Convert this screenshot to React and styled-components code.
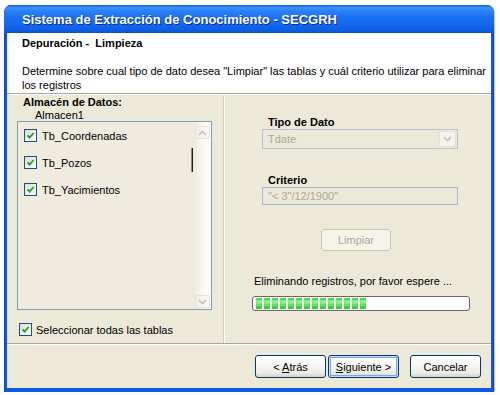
import React from "react";
import styled, { createGlobalStyle } from "styled-components";

const Global = createGlobalStyle`
  html, body { margin: 0; padding: 0; background: #ffffff; }
  body { font-family: "Liberation Sans", Arial, sans-serif; font-size: 11px; color: #000; }
  * { box-sizing: border-box; }
`;

const Window = styled.div`
  margin: 5px 0 0 4px;
  width: 490px;
  height: 387px;
  display: flex;
  flex-direction: column;
  border-radius: 7px 7px 0 0;
  overflow: hidden;
  background: #0843d6;
  box-shadow: 1px 1px 1px rgba(0,0,0,0.25);
`;

const TitleBar = styled.div`
  height: 28px;
  flex: none;
  display: flex;
  align-items: center;
  padding: 1px 0 0 18px;
  background: linear-gradient(to bottom, #0a5ee8 0%, #3d91fa 10%, #2c80f7 22%, #1a70f2 45%, #1268ee 70%, #0d5ee3 90%, #0a50d0 100%);
  color: #ffffff;
  font-family: "Liberation Sans", Arial, sans-serif;
  font-weight: bold;
  font-size: 13px;
  text-shadow: 1px 1px 0 #0b2a9a;
`;

const Frame = styled.div`
  flex: 1;
  display: flex;
  padding: 0 3px 4px 3px;
  background: linear-gradient(to right, #0a3fcf, #1058ec 2px, #1058ec calc(100% - 2px), #0a3fcf);
`;

const Content = styled.div`
  flex: 1;
  display: flex;
  flex-direction: column;
  background: #ece9d8;
`;

const Header = styled.div`
  height: 61px;
  flex: none;
  background: #ffffff;
  border-bottom: 1px solid #aca899;
  box-shadow: 0 1px 0 #ffffff;
  padding: 4px 0 0 15px;
`;

const HeaderTitle = styled.div`
  font-weight: bold;
  font-size: 11px;
  line-height: 13px;
`;

const HeaderText = styled.div`
  margin-top: 14px;
  font-size: 11px;
  line-height: 14px;
`;

const Body = styled.div`
  flex: 1;
  display: grid;
  grid-template-columns: 217px 265px;
  margin-top: 1px;
`;

const LeftPane = styled.div`
  padding: 1px 0 0 10px;
  border-right: 1px solid #d3cfbd;
  box-shadow: 1px 0 0 #ffffff;
  display: flex;
  flex-direction: column;
`;

const PaneTitle = styled.div`
  font-weight: bold;
  line-height: 13px;
  margin-left: 6px;
`;

const StoreName = styled.div`
  line-height: 13px;
  margin-left: 18px;
`;

const ListBox = styled.div`
  position: relative;
  margin-top: -1px;
  width: 195px;
  height: 189px;
  border: 1px solid #7f9db9;
  background: #efecdf;
  display: flex;
`;

const Items = styled.div`
  flex: 1;
  display: flex;
  flex-direction: column;
  padding-left: 6px;
`;

const Item = styled.label`
  height: 27px;
  display: flex;
  align-items: center;
  gap: 5px;
  font-size: 11px;
`;

const Caret = styled.div`
  position: absolute;
  left: 173px;
  top: 26px;
  width: 2px;
  height: 24px;
  background: #1e1e1e;
  border-left: 1px solid #8a8a8a;
`;

const ScrollBar = styled.div`
  width: 17px;
  display: flex;
  flex-direction: column;
  justify-content: space-between;
  padding: 4px 1px 1px 1px;
  background: linear-gradient(to right, #eeebe0, #fbfaf6 60%, #ffffff);
`;

const ScrollBtn = styled.div`
  height: 13px;
  display: flex;
  align-items: center;
  justify-content: center;
  border: 1px solid #e4e2d8;
  border-radius: 2px;
  background: linear-gradient(to right, #f1efe8, #f9f8f4);
`;

const SelectAll = styled.label`
  margin: 13px 0 0 2px;
  display: flex;
  align-items: center;
  gap: 4px;
`;

const Box = styled.span`
  width: 13px;
  height: 13px;
  flex: none;
  border: 1px solid #1c5180;
  background: linear-gradient(135deg, #dcdcd7, #ffffff);
  display: flex;
  align-items: center;
  justify-content: center;
`;

const RightPane = styled.div`
  display: flex;
  flex-direction: column;
  padding: 21px 0 0 38px;
`;

const FieldLabel = styled.div`
  font-weight: bold;
  line-height: 13px;
  margin: ${(p) => p.$top || 0}px 0 0 6px;
`;

const Combo = styled.div`
  width: 196px;
  height: 20px;
  border: 1px solid #b7c3d2;
  display: flex;
  align-items: center;
  justify-content: space-between;
  padding-left: 5px;
  color: #aca899;
`;

const ComboArrow = styled.div`
  width: 17px;
  height: 16px;
  margin-right: 1px;
  border-radius: 2px;
  border: 1px solid #e2e0d6;
  background: #f4f3ee;
  display: flex;
  align-items: center;
  justify-content: center;
`;

const TextField = styled.div`
  width: 196px;
  height: 18px;
  border: 1px solid #a7b8cc;
  display: flex;
  align-items: center;
  padding-left: 5px;
  color: #aca899;
`;

const DisabledButton = styled.div`
  margin: 24px 0 0 59px;
  width: 70px;
  height: 22px;
  border: 1px solid #cac8bb;
  border-radius: 3px;
  background: #f5f4ea;
  color: #aca899;
  display: flex;
  align-items: center;
  justify-content: center;
`;

const Status = styled.div`
  margin: 24px 0 0 -8px;
  line-height: 13px;
`;

const Progress = styled.div`
  margin: 8px 0 0 -10px;
  width: 218px;
  height: 15px;
  border: 1px solid #686868;
  border-radius: 3px;
  background: #ffffff;
  display: flex;
  align-items: center;
  gap: 2px;
  padding-left: 3px;
`;

const Block = styled.span`
  width: 6px;
  height: 11px;
  background: linear-gradient(to bottom, #2ed330 0%, #9af09c 35%, #6fe471 55%, #26cc27 100%);
`;

const Footer = styled.div`
  height: 45px;
  flex: none;
  border-top: 1px solid #aca899;
  box-shadow: inset 0 1px 0 #ffffff;
  display: flex;
  justify-content: flex-end;
  align-items: flex-start;
  padding: 11px 10px 0 0;
`;

const Button = styled.button`
  width: 71px;
  height: 23px;
  margin-left: ${(p) => p.$gap || 0}px;
  font-family: "Liberation Sans", Arial, sans-serif;
  font-size: 11px;
  color: #000;
  border: 1px solid #003c74;
  border-radius: 3px;
  background: linear-gradient(to bottom, #ffffff 0%, #f7f7f3 45%, #ecebe4 80%, #d8d3c7 100%);
  box-shadow: ${(p) =>
    p.$default ? "inset 0 0 0 1px #c6dcfb, inset 0 0 0 2px #7ea3ea" : "none"};
  padding: 0;
  u { text-decoration: underline; }
`;

const Check = () => (
  <svg width="9" height="9" viewBox="0 0 9 9">
    <path d="M1.5 4.3 L3.6 6.6 L7.6 2" fill="none" stroke="#21a121" strokeWidth="1.8" />
  </svg>
);

const Chevron = ({ up, color = "#c3c2b9" }) => (
  <svg width="9" height="6" viewBox="0 0 9 6">
    <path
      d={up ? "M1 5 L4.5 1.5 L8 5" : "M1 1 L4.5 4.5 L8 1"}
      fill="none"
      stroke={color}
      strokeWidth="1.6"
    />
  </svg>
);

const tables = ["Tb_Coordenadas", "Tb_Pozos", "Tb_Yacimientos"];

export default function App() {
  return (
    <>
      <Global />
      <Window>
        <TitleBar>Sistema de Extracción de Conocimiento - SECGRH</TitleBar>
        <Frame>
          <Content>
            <Header>
              <HeaderTitle>Depuración - &nbsp;Limpieza</HeaderTitle>
              <HeaderText>
                Determine sobre cual tipo de dato desea "Limpiar" las tablas y cuál criterio utilizar para eliminar
                <br />
                los registros
              </HeaderText>
            </Header>
            <Body>
              <LeftPane>
                <PaneTitle>Almacén de Datos:</PaneTitle>
                <StoreName>Almacen1</StoreName>
                <ListBox>
                  <Items>
                    {tables.map((t) => (
                      <Item key={t}>
                        <Box>
                          <Check />
                        </Box>
                        {t}
                      </Item>
                    ))}
                  </Items>
                  <ScrollBar>
                    <ScrollBtn>
                      <Chevron up />
                    </ScrollBtn>
                    <ScrollBtn>
                      <Chevron />
                    </ScrollBtn>
                  </ScrollBar>
                  <Caret />
                </ListBox>
                <SelectAll>
                  <Box>
                    <Check />
                  </Box>
                  Seleccionar todas las tablas
                </SelectAll>
              </LeftPane>
              <RightPane>
                <FieldLabel>Tipo de Dato</FieldLabel>
                <Combo>
                  Tdate
                  <ComboArrow>
                    <Chevron />
                  </ComboArrow>
                </Combo>
                <FieldLabel $top={25}>Criterio</FieldLabel>
                <TextField>"&lt; 3"/12/1900"</TextField>
                <DisabledButton>Limpiar</DisabledButton>
                <Status>Eliminando registros, por favor espere ...</Status>
                <Progress>
                  {Array.from({ length: 14 }).map((_, i) => (
                    <Block key={i} />
                  ))}
                </Progress>
              </RightPane>
            </Body>
            <Footer>
              <Button>
                &lt; <u>A</u>trás
              </Button>
              <Button $gap={2} $default>
                <u>S</u>iguiente &gt;
              </Button>
              <Button $gap={11}>Cancelar</Button>
            </Footer>
          </Content>
        </Frame>
      </Window>
    </>
  );
}
